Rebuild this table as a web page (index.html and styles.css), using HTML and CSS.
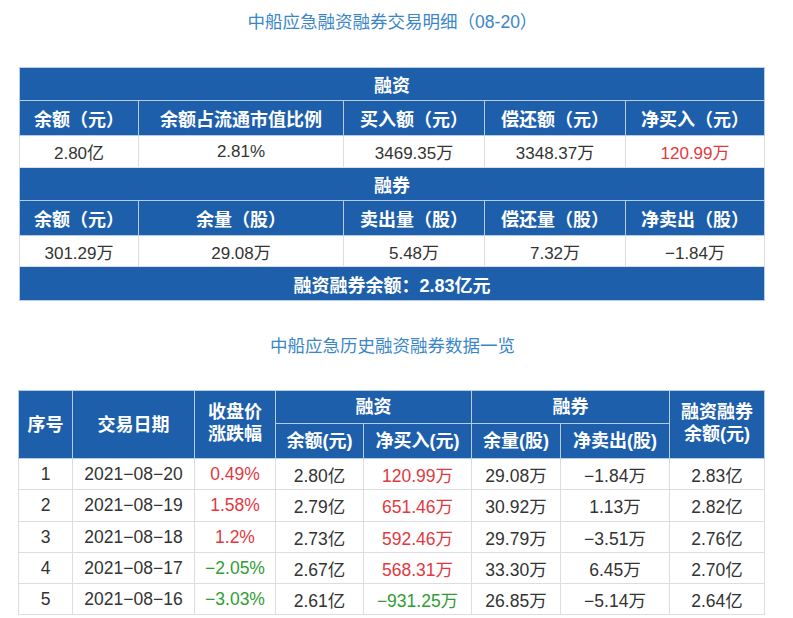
FILE: index.html
```html
<!DOCTYPE html>
<html lang="zh-CN">
<head>
<meta charset="utf-8">
<link rel="stylesheet" href="styles.css">
</head>
<body>
<div class="page">
  <h2 class="title title-1">中船应急融资融券交易明细（08-20）</h2>
  <table class="detail">
    <colgroup>
      <col style="width:119px"><col style="width:205px"><col style="width:141px"><col style="width:141px"><col style="width:139px">
    </colgroup>
    <tr class="h-group"><th colspan="5">融资</th></tr>
    <tr class="h-cols"><th>余额（元）</th><th>余额占流通市值比例</th><th>买入额（元）</th><th>偿还额（元）</th><th>净买入（元）</th></tr>
    <tr class="d-row r1"><td>2.80亿</td><td>2.81%</td><td>3469.35万</td><td>3348.37万</td><td class="up">120.99万</td></tr>
    <tr class="h-group"><th colspan="5">融券</th></tr>
    <tr class="h-cols"><th>余额（元）</th><th>余量（股）</th><th>卖出量（股）</th><th>偿还量（股）</th><th>净卖出（股）</th></tr>
    <tr class="d-row r2"><td>301.29万</td><td>29.08万</td><td>5.48万</td><td>7.32万</td><td>−1.84万</td></tr>
    <tr class="h-sum"><th colspan="5">融资融券余额：2.83亿元</th></tr>
  </table>

  <h2 class="title title-2">中船应急历史融资融券数据一览</h2>
  <table class="history">
    <colgroup>
      <col style="width:54px"><col style="width:122px"><col style="width:81px"><col style="width:88px"><col style="width:108px"><col style="width:89px"><col style="width:109px"><col style="width:95px">
    </colgroup>
    <tr class="hh1">
      <th rowspan="2">序号</th><th rowspan="2">交易日期</th><th rowspan="2" class="two">收盘价<br>涨跌幅</th>
      <th colspan="2">融资</th><th colspan="2">融券</th><th rowspan="2" class="two">融资融券<br>余额(元)</th>
    </tr>
    <tr class="hh2"><th>余额(元)</th><th>净买入(元)</th><th>余量(股)</th><th>净卖出(股)</th></tr>
    <tr class="hr a"><td>1</td><td>2021−08−20</td><td class="up">0.49%</td><td>2.80亿</td><td class="up">120.99万</td><td>29.08万</td><td>−1.84万</td><td>2.83亿</td></tr>
    <tr class="hr b"><td>2</td><td>2021−08−19</td><td class="up">1.58%</td><td>2.79亿</td><td class="up">651.46万</td><td>30.92万</td><td>1.13万</td><td>2.82亿</td></tr>
    <tr class="hr a"><td>3</td><td>2021−08−18</td><td class="up">1.2%</td><td>2.73亿</td><td class="up">592.46万</td><td>29.79万</td><td>−3.51万</td><td>2.76亿</td></tr>
    <tr class="hr a"><td>4</td><td>2021−08−17</td><td class="down">−2.05%</td><td>2.67亿</td><td class="up">568.31万</td><td>33.30万</td><td>6.45万</td><td>2.70亿</td></tr>
    <tr class="hr a"><td>5</td><td>2021−08−16</td><td class="down">−3.03%</td><td>2.61亿</td><td class="down">−931.25万</td><td>26.85万</td><td>−5.14万</td><td>2.64亿</td></tr>
  </table>
</div>
</body>
</html>
```

FILE: styles.css
```css
html, body {
  margin: 0;
  padding: 0;
  background: #ffffff;
}
.page {
  width: 793px;
  font-family: "Liberation Sans", "Noto Sans CJK SC", sans-serif;
  color: #333333;
}
.title {
  margin: 0;
  width: 785px;
  font-weight: normal;
  font-size: 17.5px;
  line-height: 20px;
  color: #3a86c8;
  text-align: center;
}
.title-1 {
  padding-top: 12px;
  height: 20px;
  margin-bottom: 35px;
}
.title-2 {
  padding-top: 35px;
  height: 20px;
  margin-bottom: 34px;
}
table {
  border-collapse: collapse;
  table-layout: fixed;
  margin-left: 19px;
}
.detail { width: 745px; }
.history { width: 746px; margin-left: 18px; }
th, td {
  padding: 0;
  text-align: center;
  white-space: nowrap;
  overflow: hidden;
}
th {
  background: #1e5fac;
  color: #ffffff;
  font-weight: bold;
  font-size: 18px;
  border: 1px solid #b7cde6;
}
td {
  background: #ffffff;
  font-size: 17px;
  border: 1px solid #dddddd;
}
.detail .h-group { height: 33px; }
.detail .h-cols { height: 35px; }
.detail .r1 { height: 32px; }
.detail .r2 { height: 31px; }
.detail .h-sum { height: 34px; }
.history th { font-size: 18px; line-height: 22px; }
.history .two { padding-bottom: 3px; }
.history .hh1 { height: 33px; }
.history .hh2 { height: 35px; }
.history td { font-size: 17.5px; }
.history .a { height: 31px; }
.history .b { height: 32px; }
.up { color: #e2393f; }
.down { color: #2f9d33; }
```
